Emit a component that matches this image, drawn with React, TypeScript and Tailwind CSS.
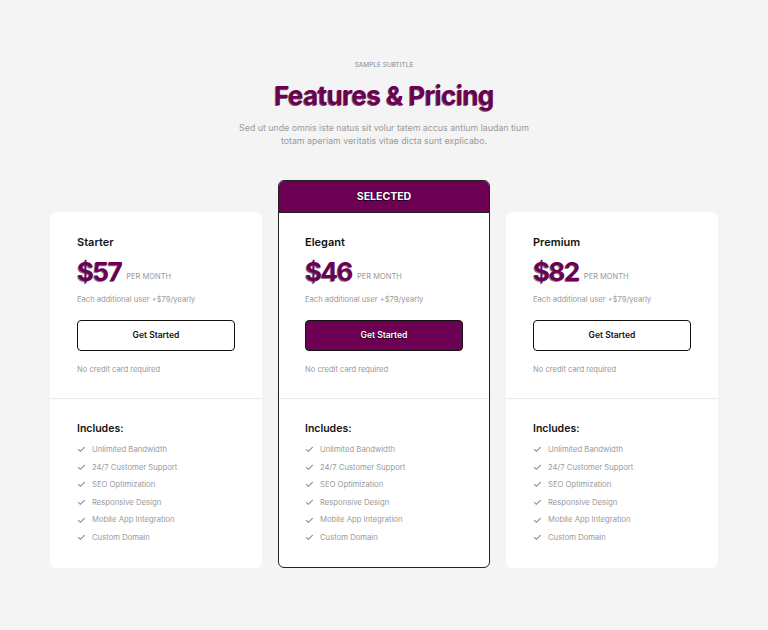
import { Check } from "lucide-react";

const PURPLE = "#6e0054";

const FEATURES = [
  "Unlimited Bandwidth",
  "24/7 Customer Support",
  "SEO Optimization",
  "Responsive Design",
  "Mobile App Integration",
  "Custom Domain",
];

type Plan = { name: string; price: number; selected?: boolean };

const PLANS: Plan[] = [
  { name: "Starter", price: 57 },
  { name: "Elegant", price: 46, selected: true },
  { name: "Premium", price: 82 },
];

function PlanCard({ plan }: { plan: Plan }) {
  return (
    <div
      className={
        plan.selected
          ? "flex w-[212px] flex-col overflow-hidden rounded-[6px] border border-[#222] bg-white"
          : "flex w-[212px] flex-col overflow-hidden rounded-[6px] bg-white"
      }
    >
      {plan.selected && (
        <div className="flex h-[32px] items-center justify-center border-b border-[#222] bg-[#6e0054] text-[10.5px] font-bold text-white [text-shadow:-1px_1px_0_rgba(0,0,0,0.8)]">
          SELECTED
        </div>
      )}
      <div className={plan.selected ? "px-[26px] pt-[23px] pb-[22px]" : "px-[27px] pt-[24px] pb-[22px]"}>
        <div className="text-[11px] leading-[12px] font-semibold text-[#111]">{plan.name}</div>
        <div className="mt-[9px] flex items-end gap-[5px]">
          <span
            className="text-[26px] leading-[30px] font-bold tracking-[-1.5px] [text-shadow:-1px_1px_0_rgba(0,0,0,0.5)]"
            style={{ color: PURPLE }}
          >
            ${plan.price}
          </span>
          <span className="mb-[5px] text-[7.5px] text-[#999]">PER MONTH</span>
        </div>
        <div className="mt-[7px] text-[7.6px] leading-[12px] text-[#9a9a9a]">Each additional user +$79/yearly</div>
        <button
          className={
            plan.selected
              ? "mt-[14px] flex h-[31px] w-[158px] items-center justify-center rounded-[4px] border border-[#111] bg-[#6e0054] text-[8.5px] font-semibold text-white [text-shadow:-1px_1px_0_rgba(0,0,0,0.8)]"
              : "mt-[14px] flex h-[31px] w-[158px] items-center justify-center rounded-[4px] border border-[#111] bg-white text-[8.5px] font-semibold text-[#111]"
          }
        >
          Get Started
        </button>
        <div className="mt-[13px] text-[7.6px] leading-[12px] text-[#9a9a9a]">No credit card required</div>
      </div>
      <div className="h-px bg-[#ececec]" />
      <div className={plan.selected ? "px-[26px] pt-[24px] pb-[20px]" : "px-[27px] pt-[24px] pb-[21px]"}>
        <div className="text-[10.5px] leading-[12px] font-semibold text-[#111]">Includes:</div>
        <ul className="mt-[6px] flex flex-col">
          {FEATURES.map((f) => (
            <li key={f} className="flex h-[17.6px] items-center gap-[6px] text-[7.7px] text-[#9a9a9a]">
              <Check size={9} strokeWidth={3} className="text-[#999]" />
              {f}
            </li>
          ))}
        </ul>
      </div>
    </div>
  );
}

export default function App() {
  return (
    <div className="min-h-[630px] w-full bg-[#f4f4f4] font-['Inter',sans-serif]">
      <div className="flex flex-col items-center pt-[61px]">
        <div className="text-[6.5px] leading-[9px] text-[#888]">SAMPLE SUBTITLE</div>
        <h1
          className="mt-[10px] text-[26px] leading-[32px] font-bold tracking-[-0.6px] [text-shadow:-1px_1px_0_rgba(0,0,0,0.6)]"
          style={{ color: PURPLE }}
        >
          Features &amp; Pricing
        </h1>
        <p className="mt-[9px] w-[300px] text-center text-[8.8px] leading-[13px] text-[#9a9a9a]">
          Sed ut unde omnis iste natus sit volur tatem accus antium laudan tium totam aperiam veritatis vitae dicta sunt explicabo.
        </p>
      </div>
      <div className="mt-[33px] flex items-end justify-center gap-[16px]">
        {PLANS.map((p) => (
          <PlanCard key={p.name} plan={p} />
        ))}
      </div>
    </div>
  );
}
